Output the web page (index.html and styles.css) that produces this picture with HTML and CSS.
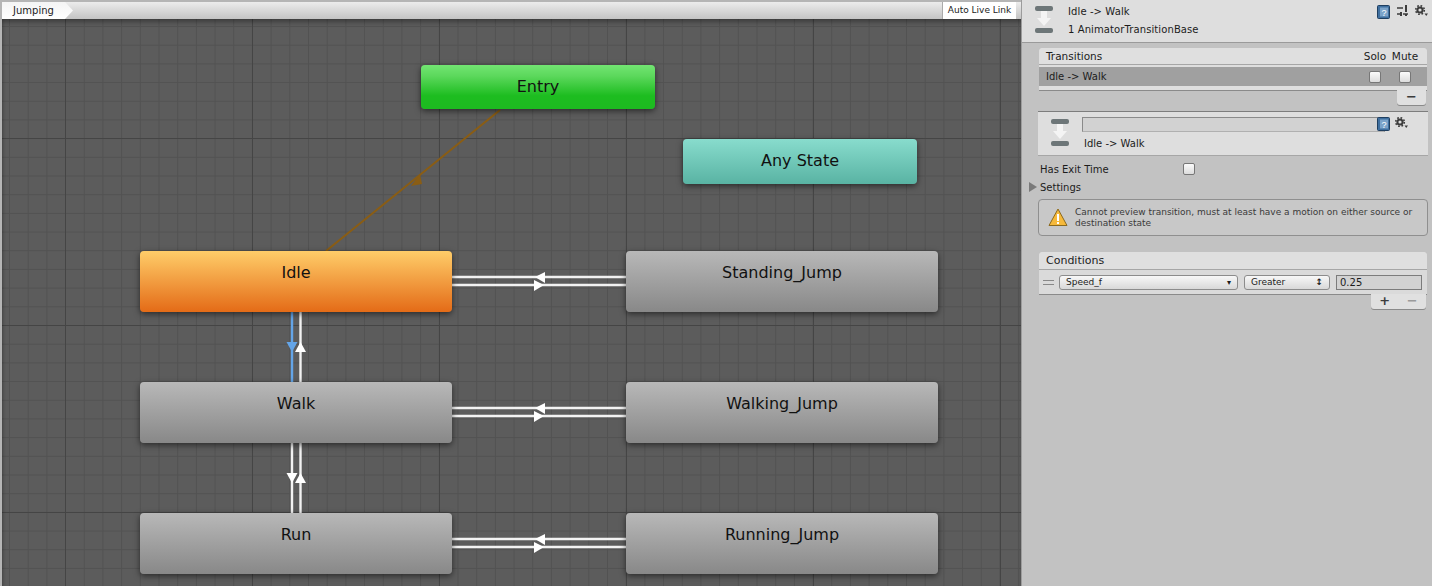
FILE: index.html
```html
<!DOCTYPE html>
<html lang="en">
<head>
    <meta charset="UTF-8">
    <title>Animator - Jumping</title>
    <link rel="stylesheet" href="styles.css">
</head>
<body>
    <svg class="defs" width="0" height="0">
        <symbol id="transition-icon" viewBox="0 0 18 27">
            <rect x="0" y="0" width="18" height="5" rx="2" fill="#6d7678"/>
            <rect x="0" y="22" width="18" height="5" rx="2" fill="#6d7678"/>
            <path d="M6 5h6v7h4l-7 8-7-8h4z" fill="#f4f4f4"/>
        </symbol>
        <symbol id="book-icon" viewBox="0 0 13 14">
            <rect x="0.5" y="0.5" width="12" height="13" rx="1" fill="#3f6f9f" stroke="#1f3f60"/>
            <rect x="3" y="2.5" width="8" height="9" fill="#7ba3c9"/>
            <text x="7" y="10.5" text-anchor="middle" font-size="9" font-family="Liberation Sans" fill="#fff">?</text>
        </symbol>
        <symbol id="gear-icon" viewBox="0 0 13 12">
            <circle cx="5" cy="5" r="2.6" fill="none" stroke="#3c3c3c" stroke-width="2"/>
            <circle cx="5" cy="5" r="4.3" fill="none" stroke="#3c3c3c" stroke-width="1.6" stroke-dasharray="1.7 1.68"/>
            <path d="M9.5 8.5h3.5l-1.75 2.5z" fill="#3c3c3c"/>
        </symbol>
    </svg>

    <div class="window">
        <div class="graph-pane">
            <div class="toolbar">
                <div class="crumb">Jumping</div>
                <div class="live-link">Auto Live Link</div>
            </div>
            <div class="canvas">
                <svg class="links" width="1019" height="567" viewBox="2 19 1019 567">
                    <line x1="500" y1="110" x2="326" y2="251" stroke="#8a5d14" stroke-width="2"/>
                    <polygon points="420,174 422,184 411,186" fill="#8a5d14"/>

                    <g stroke="#f2f2f2" stroke-width="2.4">
                        <line x1="452" y1="277" x2="626" y2="277"/>
                        <line x1="452" y1="285" x2="626" y2="285"/>
                        <line x1="452" y1="408" x2="626" y2="408"/>
                        <line x1="452" y1="416" x2="626" y2="416"/>
                        <line x1="452" y1="539" x2="626" y2="539"/>
                        <line x1="452" y1="547" x2="626" y2="547"/>
                        <line x1="300.5" y1="312" x2="300.5" y2="382"/>
                        <line x1="292" y1="443" x2="292" y2="513"/>
                        <line x1="300.5" y1="443" x2="300.5" y2="513"/>
                    </g>
                    <line x1="292" y1="312" x2="292" y2="382" stroke="#64a5e8" stroke-width="2.4"/>

                    <g fill="#fff">
                        <polygon points="535,277 545,272 545,283"/>
                        <polygon points="534,280 534,291 544,285"/>
                        <polygon points="535,408 545,403 545,414"/>
                        <polygon points="534,411 534,422 544,416"/>
                        <polygon points="535,539 545,534 545,545"/>
                        <polygon points="534,542 534,553 544,547"/>
                        <polygon points="300.5,342 295,352 306,352"/>
                        <polygon points="286.5,473 297.5,473 292,483"/>
                        <polygon points="300.5,473 295,483 306,483"/>
                    </g>
                    <polygon points="286.5,342 297.5,342 292,352" fill="#64a5e8"/>
                </svg>

                <div class="node node-green node-entry">Entry</div>
                <div class="node node-teal node-any">Any State</div>
                <div class="node node-orange node-idle">Idle</div>
                <div class="node node-stand">Standing_Jump</div>
                <div class="node node-walk">Walk</div>
                <div class="node node-walkjump">Walking_Jump</div>
                <div class="node node-run">Run</div>
                <div class="node node-runjump">Running_Jump</div>
            </div>
        </div>

        <div class="inspector">
            <div class="head">
                <svg class="head-icon" width="18" height="27"><use href="#transition-icon"/></svg>
                <div class="head-text">
                    <div>Idle -&gt; Walk</div>
                    <div>1 AnimatorTransitionBase</div>
                </div>
                <div class="head-tools">
                    <svg width="13" height="14"><use href="#book-icon"/></svg>
                    <svg class="sliders" width="11" height="12" viewBox="0 0 11 12">
                        <path d="M0 3h6M0 9h3M6 9h5" stroke="#3c3c3c" stroke-width="1.4"/>
                        <path d="M9 0v7M9 9v2M4 7v4" stroke="#3c3c3c" stroke-width="2"/>
                    </svg>
                    <svg width="13" height="12"><use href="#gear-icon"/></svg>
                </div>
            </div>

            <div class="list list-transitions">
                <div class="list-head">
                    <span class="grow">Transitions</span>
                    <span class="col">Solo</span>
                    <span class="col">Mute</span>
                </div>
                <div class="list-row selected">
                    <span class="grow">Idle -&gt; Walk</span>
                    <span class="col"><span class="check"></span></span>
                    <span class="col"><span class="check"></span></span>
                </div>
                <div class="list-end"></div>
            </div>
            <div class="list-foot foot-minus"><span class="foot-btn">&minus;</span></div>

            <div class="sub-head">
                <svg width="18" height="27"><use href="#transition-icon"/></svg>
                <div class="sub-main">
                    <div class="sub-field">
                        <div class="field-box"></div>
                        <svg class="field-book" width="13" height="14"><use href="#book-icon"/></svg>
                        <svg class="field-gear" width="13" height="12"><use href="#gear-icon"/></svg>
                    </div>
                    <div class="sub-name">Idle -&gt; Walk</div>
                </div>
            </div>

            <div class="prop">
                <span class="prop-label">Has Exit Time</span>
                <span class="check"></span>
            </div>
            <div class="foldout"><span class="tri"></span>Settings</div>

            <div class="warn">
                <svg width="20" height="19" viewBox="0 0 20 19">
                    <path d="M10 1L19 17.5H1z" fill="#f6b93b" stroke="#8c6a1e" stroke-linejoin="round"/>
                    <rect x="9" y="6" width="2" height="7" fill="#fff"/>
                    <rect x="9" y="14" width="2" height="2" fill="#fff"/>
                </svg>
                <p>Cannot preview transition, must at least have a motion on either source or destination state</p>
            </div>

            <div class="list list-conditions">
                <div class="list-head">Conditions</div>
                <div class="cond-row">
                    <span class="grip"></span>
                    <div class="select select-param">Speed_f<span class="caret">&#9662;</span></div>
                    <div class="select select-op">Greater<span class="caret updown">&#8597;</span></div>
                    <div class="value">0.25</div>
                </div>
            </div>
            <div class="list-foot foot-both"><span class="foot-btn plus">+</span><span class="foot-btn dim">&minus;</span></div>
        </div>
    </div>
</body>
</html>
```

FILE: styles.css
```css
html, body {
    margin: 0;
    height: 100%;
    overflow: hidden;
}
body {
    font-family: "DejaVu Sans", sans-serif;
    font-size: 10px;
    color: #1c1c1c;
    background: #c2c2c2;
}
.defs {
    position: absolute;
}
.window {
    display: flex;
    width: 1432px;
    height: 586px;
}

/* graph side */
.graph-pane {
    width: 1021px;
    height: 586px;
    padding: 2px 0 0 2px;
    box-sizing: border-box;
    background: #b5b5b5;
    display: flex;
    flex-direction: column;
}
.toolbar {
    height: 17px;
    flex: none;
    display: flex;
    justify-content: space-between;
    background: linear-gradient(#ececec, #c4c4c4);
}
.crumb {
    width: 64px;
    padding-left: 11px;
    line-height: 17px;
    background: linear-gradient(#f4f4f4, #fff);
    clip-path: polygon(0 0, 63px 0, 71px 50%, 63px 100%, 0 100%);
    width: 60px;
}
.live-link {
    width: 73px;
    margin-right: 5px;
    text-align: center;
    font-size: 9px;
    line-height: 17px;
    background: #fff;
    border-left: 1px solid #aaa;
}
.canvas {
    position: relative;
    flex: 1;
    background-color: #5c5c5c;
    background-image:
        linear-gradient(to right, #454545 1px, transparent 1px),
        linear-gradient(to bottom, #454545 1px, transparent 1px),
        linear-gradient(to right, #525252 1px, transparent 1px),
        linear-gradient(to bottom, #525252 1px, transparent 1px);
    background-size: 187px 187px, 187px 187px, 18.7px 18.7px, 18.7px 18.7px;
    background-position: 63px 119px, 63px 119px, 7px 7px, 7px 7px;
    overflow: hidden;
}
.canvas::before {
    content: "";
    position: absolute;
    inset: 0;
    box-shadow: inset 0 5px 5px -2px rgba(0, 0, 0, 0.35), inset 3px 0 3px -2px rgba(0, 0, 0, 0.2);
}
.links {
    position: absolute;
    left: 0;
    top: 0;
}
.node {
    position: absolute;
    width: 312px;
    height: 61px;
    box-sizing: border-box;
    padding-top: 12px;
    text-align: center;
    font-size: 16px;
    line-height: 20px;
    color: #111;
    border-radius: 4px;
    background: linear-gradient(#b8b8b8, #888888);
    box-shadow: 0 2px 6px rgba(0, 0, 0, 0.55);
}
.node-green {
    background: linear-gradient(#72e572 0, #5cd85c 25%, #1dbd20 70%, #1dba20);
}
.node-teal {
    background: linear-gradient(#88dccd, #59b3a3);
}
.node-orange {
    background: linear-gradient(#ffcd69, #e46b17);
}
.node-entry { left: 419px; top: 46px; width: 234px; height: 44px; }
.node-any { left: 681px; top: 120px; width: 234px; height: 45px; }
.node-idle { left: 138px; top: 232px; }
.node-stand { left: 624px; top: 232px; }
.node-walk { left: 138px; top: 363px; }
.node-walkjump { left: 624px; top: 363px; }
.node-run { left: 138px; top: 494px; }
.node-runjump { left: 624px; top: 494px; }

/* inspector side */
.inspector {
    position: relative;
    width: 411px;
    box-sizing: border-box;
    padding-left: 3px;
    border-left: 0;
    background: #c2c2c2;
    box-shadow: inset 1px 0 0 #9c9c9c;
}
.head {
    display: flex;
    height: 43px;
    padding: 6px 4px 0 13px;
    box-sizing: border-box;
    margin-left: -2px;
    background: #dedede;
    border-bottom: 1px solid #9a9a9a;
}
.head-icon {
    flex: none;
}
.head-text {
    flex: 1;
    padding-left: 15px;
    line-height: 18px;
    letter-spacing: 0.1px;
}
.head-text div:first-child {
    margin-top: -3px;
}
.head-tools {
    display: flex;
    gap: 7px;
    align-items: flex-start;
    margin-top: -1px;
}
.list {
    margin: 0 5px 0 15px;
    border-radius: 4px 4px 0 0;
    background: #dedede;
    overflow: hidden;
}
.list-transitions {
    margin-top: 5px;
    height: 42px;
    box-shadow: 0 1px 0 #8a8a8a;
}
.list-head {
    height: 16px;
    padding: 0 7px;
    display: flex;
    line-height: 16px;
    font-size: 10.5px;
    border-bottom: 1px solid #a6a6a6;
    background: #dfdfdf;
}
.grow {
    flex: 1;
}
.col {
    width: 30px;
    text-align: center;
    display: flex;
    justify-content: center;
    align-items: center;
}
.list-row {
    display: flex;
    height: 19px;
    margin-top: 2px;
    padding: 0 7px;
    line-height: 19px;
}
.selected {
    background: #a0a0a0;
}
.check {
    display: inline-block;
    width: 10px;
    height: 10px;
    border: 1px solid #777;
    border-radius: 2px;
    background: linear-gradient(#fbfbfb, #dcdcdc);
}
.list-foot {
    display: flex;
    justify-content: flex-end;
    margin-right: 6px;
}
.foot-btn {
    height: 15px;
    line-height: 14px;
    text-align: center;
    font-size: 13px;
    font-weight: bold;
    color: #3c3c3c;
}
.foot-minus .foot-btn {
    width: 29px;
    background: #e0e0e0;
    border-radius: 0 0 3px 3px;
    box-shadow: 0 1px 0 #8a8a8a;
}
.foot-both {
    width: 55px;
    margin-left: auto;
    height: 15px;
    background: #e0e0e0;
    border-radius: 0 0 3px 3px;
    box-shadow: 0 1px 0 #8a8a8a;
    justify-content: space-around;
}
.dim {
    color: #9a9a9a;
}
.sub-head {
    display: flex;
    margin: 6px 4px 0 14px;
    height: 45px;
    padding-left: 13px;
    background: #dedede;
    border-top: 1px solid #7d7d7d;
    border-bottom: 1px solid #a6a6a6;
    box-sizing: border-box;
    align-items: flex-start;
    padding-top: 7px;
}
.sub-main {
    margin-left: 13px;
    flex: 1;
}
.sub-field {
    position: relative;
    height: 16px;
    margin-top: -2px;
}
.field-box {
    width: 303px;
    height: 14px;
    background: #d2d2d2;
    border: 1px solid #8a8a8a;
    border-bottom-color: #b0b0b0;
    box-sizing: border-box;
    height: 15px;
}
.field-book {
    position: absolute;
    left: 295px;
    top: 0;
}
.field-gear {
    position: absolute;
    left: 313px;
    top: 0;
}
.sub-name {
    margin: 4px 0 0 2px;
    line-height: 14px;
}
.prop {
    display: flex;
    align-items: center;
    height: 14px;
    margin: 6px 0 0 16px;
}
.prop-label {
    width: 143px;
}
.foldout {
    display: flex;
    align-items: center;
    height: 14px;
    margin: 4px 0 0 5px;
}
.tri {
    width: 0;
    height: 0;
    margin-right: 3px;
    border-left: 8px solid #7a7a7a;
    border-top: 5px solid transparent;
    border-bottom: 5px solid transparent;
}
.warn {
    display: flex;
    align-items: center;
    gap: 7px;
    height: 37px;
    margin: 5px 4px 0 14px;
    padding-left: 9px;
    box-sizing: border-box;
    background: #c8c8c8;
    border: 1px solid #8f8f8f;
    border-radius: 4px;
}
.warn p {
    margin: 0;
    width: 345px;
    font-size: 9px;
    line-height: 11px;
    color: #3a3a3a;
}
.list-conditions {
    margin-top: 16px;
    height: 42px;
    box-shadow: 0 1px 0 #8a8a8a;
}
.list-conditions .list-head {
    height: 17px;
    line-height: 17px;
    font-size: 11px;
}
.cond-row {
    display: flex;
    align-items: center;
    gap: 6px;
    height: 24px;
    padding-left: 4px;
    background: #dadada;
}
.grip {
    width: 11px;
    height: 3px;
    margin-right: -1px;
    border-top: 1px solid #888;
    border-bottom: 1px solid #888;
}
.select {
    display: flex;
    justify-content: space-between;
    align-items: center;
    height: 15px;
    padding: 0 6px;
    box-sizing: border-box;
    font-size: 9px;
    border: 1px solid #8c8c8c;
    border-radius: 3px;
    background: linear-gradient(#f8f8f8, #d8d8d8);
}
.select-param {
    width: 179px;
}
.select-op {
    width: 86px;
}
.caret {
    font-size: 8px;
}
.updown {
    font-size: 9px;
    font-weight: bold;
}
.value {
    width: 86px;
    height: 15px;
    box-sizing: border-box;
    padding-left: 3px;
    line-height: 13px;
    border: 1px solid #7c7c7c;
    background: #d2d2d2;
}
```
